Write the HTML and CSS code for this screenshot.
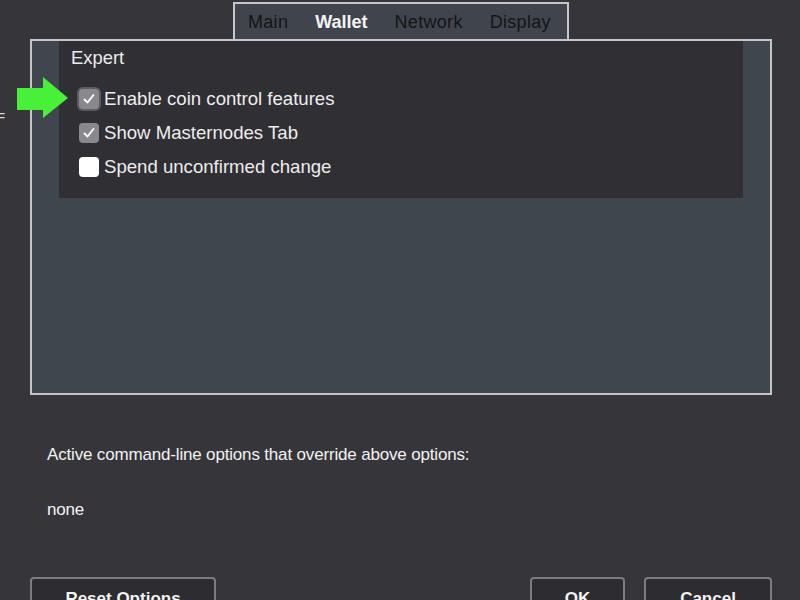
FILE: index.html
```html
<!DOCTYPE html>
<html>
<head>
<meta charset="utf-8">
<link rel="stylesheet" href="styles.css">
</head>
<body>
<div class="edge-mark">=</div>
<div class="window">
  <div class="tabs-row">
    <div class="tabs">
      <span class="tab">Main</span>
      <span class="tab active">Wallet</span>
      <span class="tab">Network</span>
      <span class="tab">Display</span>
    </div>
  </div>
  <div class="panel">
    <div class="group">
      <div class="group-title">Expert</div>
      <div class="option"><span class="box checked focus"><svg viewBox="0 0 20 20" width="20" height="20"><path d="M5.5 10.5 L8.5 13.5 L14.5 6" fill="none" stroke="#fff" stroke-width="1.8" stroke-linecap="round" stroke-linejoin="round"/></svg></span><span class="label">Enable coin control features</span></div>
      <div class="option"><span class="box checked"><svg viewBox="0 0 20 20" width="20" height="20"><path d="M5.5 10.5 L8.5 13.5 L14.5 6" fill="none" stroke="#fff" stroke-width="1.8" stroke-linecap="round" stroke-linejoin="round"/></svg></span><span class="label">Show Masternodes Tab</span></div>
      <div class="option"><span class="box"></span><span class="label">Spend unconfirmed change</span></div>
    </div>
  </div>
  <div class="info">
    <p class="info-line">Active command-line options that override above options:</p>
    <p class="info-line none">none</p>
  </div>
  <div class="buttons">
    <button class="btn reset">Reset Options</button>
    <div class="spacer"></div>
    <button class="btn ok">OK</button>
    <button class="btn cancel">Cancel</button>
  </div>
</div>
<svg class="arrow" viewBox="0 0 51 41" width="51" height="41"><path d="M0 11 H26 V0 L51 21 L26 41 V33 H0 Z" fill="#48f03a"/></svg>
</body>
</html>
```

FILE: styles.css
```css
html, body {
  margin: 0;
  padding: 0;
  width: 800px;
  height: 600px;
  overflow: hidden;
  background: #363539;
  font-family: "Liberation Sans", Arial, sans-serif;
}
body {
  position: relative;
}
.edge-mark {
  position: absolute;
  left: -4px;
  top: 107px;
  color: #d8d8d8;
  font-size: 16px;
}
.window {
  display: flex;
  flex-direction: column;
  padding-left: 30px;
  width: 742px;
}
.tabs-row {
  display: flex;
  padding-top: 2px;
  padding-left: 203px;
}
.tabs {
  display: flex;
  align-items: center;
  gap: 27px;
  height: 33px;
  width: 306px;
  padding: 2px 13px 0 13px;
  border: 2px solid #c6c7cb;
  border-bottom: none;
  background: #40454d;
}
.tab {
  font-size: 18px;
  letter-spacing: 0.3px;
  color: #141417;
}
.tab.active {
  color: #f4f4f4;
  font-weight: bold;
  letter-spacing: 0;
}
.panel {
  height: 352px;
  border: 2px solid #c4c5c9;
  background: #40464e;
  padding: 0 27px;
}
.group {
  height: 157px;
  background: #302f34;
  display: flex;
  flex-direction: column;
}
.group-title {
  font-size: 18.4px;
  color: #ececec;
  padding: 6px 0 0 12px;
  height: 35px;
}
.option {
  display: flex;
  align-items: center;
  height: 34px;
  padding-left: 20px;
}
.box {
  width: 20px;
  height: 20px;
  border-radius: 4px;
  background: #ffffff;
  margin-right: 5px;
  display: flex;
  align-items: center;
  justify-content: center;
}
.box.checked {
  background: #88888d;
}
.box.focus {
  box-shadow: 0 0 0 2px #5c5c62;
}
.label {
  font-size: 18.6px;
  color: #ededed;
}
.info {
  display: flex;
  flex-direction: column;
  padding-left: 17px;
}
.info-line {
  margin: 0;
  color: #f2f2f2;
  font-size: 17px;
  letter-spacing: -0.17px;
}
.info-line:first-child {
  margin-top: 50px;
}
.none {
  margin-top: 35px;
}
.buttons {
  display: flex;
  margin-top: 57px;
}
.spacer {
  flex: 1;
}
.btn {
  height: 40px;
  border: 2px solid #7c7c81;
  border-radius: 4px;
  background: #2d2c31;
  color: #f4f4f4;
  font-family: "Liberation Sans", Arial, sans-serif;
  font-weight: bold;
  font-size: 17px;
  padding: 10px 0 0 0;
  display: flex;
  justify-content: center;
  align-items: flex-start;
}
.reset { width: 186px; }
.ok { width: 95px; margin-right: 19px; }
.cancel { width: 128px; }
.arrow {
  position: absolute;
  left: 17px;
  top: 77px;
}
```
